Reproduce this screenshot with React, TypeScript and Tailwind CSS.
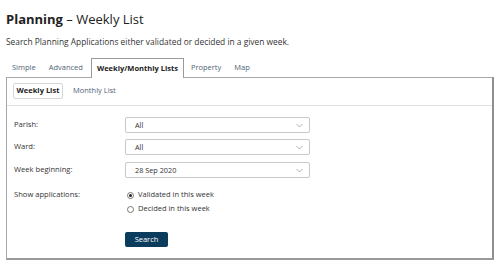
import React from "react";

function Chevron() {
  return (
    <svg width="7" height="5" viewBox="0 0 7 5" className="shrink-0">
      <path d="M0.5 1 L3.5 4 L6.5 1" fill="none" stroke="#9aa0a6" strokeWidth="0.8" />
    </svg>
  );
}

function Select({ value }: { value: string }) {
  return (
    <div className="w-[185px] h-[16px] border border-[#c9c9c9] rounded-[2px] bg-white flex items-center justify-between pl-[9px] pr-[6px] text-[7.3px] text-[#333]">
      <span>{value}</span>
      <Chevron />
    </div>
  );
}

function Radio({ checked, label }: { checked?: boolean; label: string }) {
  return (
    <div className="flex items-center gap-[4px] h-[14px]">
      <div className="w-[7px] h-[7px] rounded-full border border-[#777] flex items-center justify-center bg-white">
        {checked && <div className="w-[3px] h-[3px] rounded-full bg-[#222]" />}
      </div>
      <span className="text-[7.5px] text-[#333]">{label}</span>
    </div>
  );
}

export default function App() {
  return (
    <div
      className="w-[500px] h-[263px] bg-white px-[6px] overflow-hidden"
      style={{ fontFamily: '"Open Sans", "Noto Sans", sans-serif' }}
    >
      <h1 className="pt-[10px] text-[13px] leading-[18px] text-[#222]">
        <span className="font-bold">Planning</span> – Weekly List
      </h1>
      <p className="mt-[8px] text-[8.4px] leading-[12px] text-[#333]">
        Search Planning Applications either validated or decided in a given week.
      </p>
      <div className="mt-[10px] flex items-end h-[19px] text-[7.5px] text-[#4f6478]">
        <div className="px-[6px] h-[19px] flex items-center">Simple</div>
        <div className="px-[7px] h-[19px] flex items-center">Advanced</div>
        <div className="ml-[1px] px-[5px] h-[20px] -mb-px flex items-center border border-b-0 border-[#9a9a9a] bg-white text-[#222] font-bold relative z-10">
          Weekly/Monthly Lists
        </div>
        <div className="px-[7px] h-[19px] flex items-center">Property</div>
        <div className="px-[6px] h-[19px] flex items-center">Map</div>
      </div>
      <div className="h-[183px] border border-[#a8a8a8] border-r-[2px] border-r-[#8f8f8f] border-b-[2px] border-b-[#9a9a9a]">
        <div className="pt-[5px] pl-[6px] pb-[6px] border-b border-[#e0e0e0] flex items-center gap-[4px] text-[7.5px]">
          <div className="h-[16px] w-[50px] flex items-center justify-center border border-[#d6d6d6] rounded-[2px] font-bold text-[#222]">
            Weekly List
          </div>
          <div className="px-[6px] text-[#4f6478]">Monthly List</div>
        </div>
        <div className="pl-[7px] pt-[11px] flex flex-col text-[7.6px] text-[#333]">
          <div className="flex items-center h-[16px]">
            <div className="w-[111px]">Parish:</div>
            <Select value="All" />
          </div>
          <div className="flex items-center h-[16px] mt-[6px]">
            <div className="w-[111px]">Ward:</div>
            <Select value="All" />
          </div>
          <div className="flex items-center h-[16px] mt-[7px]">
            <div className="w-[111px]">Week beginning:</div>
            <Select value="28 Sep 2020" />
          </div>
          <div className="flex items-start mt-[10px]">
            <div className="w-[111px] h-[14px] flex items-center pl-0">Show applications:</div>
            <div className="flex flex-col pl-[2px]">
              <Radio checked label="Validated in this week" />
              <Radio label="Decided in this week" />
            </div>
          </div>
          <div className="mt-[16px] pl-[111px]">
            <button className="w-[43px] h-[15px] rounded-[2px] bg-[#0b3c5d] text-white text-[7.5px] flex items-center justify-center">
              Search
            </button>
          </div>
        </div>
      </div>
    </div>
  );
}
